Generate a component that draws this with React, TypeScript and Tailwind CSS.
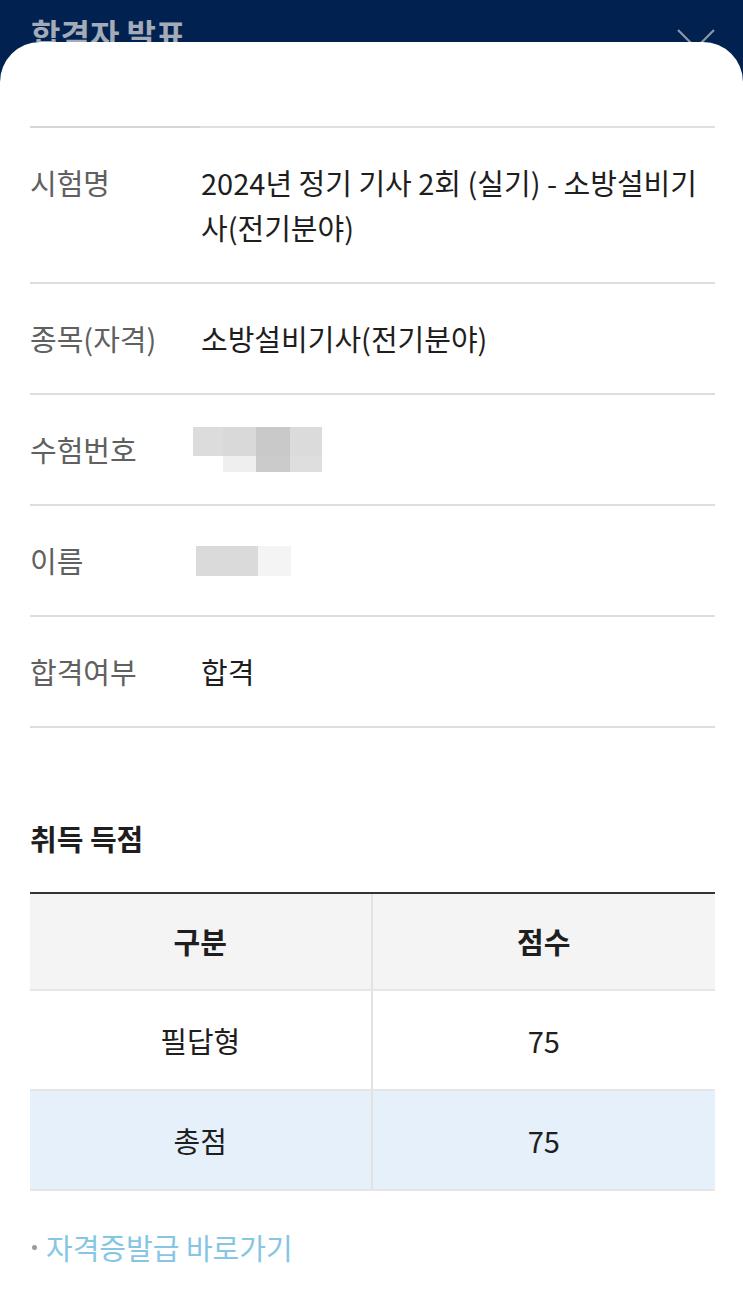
const font = { fontFamily: '"Noto Sans CJK KR", "Noto Sans", sans-serif' };

type Row = { label: string; value?: string; mask?: "id" | "name" };

const rows: Row[] = [
  { label: "시험명", value: "2024년 정기 기사 2회 (실기) - 소방설비기사(전기분야)" },
  { label: "종목(자격)", value: "소방설비기사(전기분야)" },
  { label: "수험번호", mask: "id" },
  { label: "이름", mask: "name" },
  { label: "합격여부", value: "합격" },
];

function IdMask() {
  return (
    <div className="flex h-[45px] flex-col justify-center">
      <div className="-ml-[8px] flex">
        <div className="h-[29px] w-[30px] bg-[#dcdcdc]" />
        <div className="h-[29px] w-[33px] bg-[#d9d9d9]" />
        <div className="h-[29px] w-[34px] bg-[#c9c9c9]" />
        <div className="h-[29px] w-[32px] bg-[#dbdbdb]" />
      </div>
      <div className="-ml-[8px] flex">
        <div className="h-[16px] w-[30px]" />
        <div className="h-[16px] w-[33px] bg-[#efefef]" />
        <div className="h-[16px] w-[34px] bg-[#cbcbcb]" />
        <div className="h-[16px] w-[32px] bg-[#dedede]" />
      </div>
    </div>
  );
}

function NameMask() {
  return (
    <div className="flex h-[45px] items-center">
      <div className="-ml-[5px] flex">
        <div className="h-[30px] w-[62px] bg-[#dadada]" />
        <div className="h-[30px] w-[33px] bg-[#f4f4f4]" />
      </div>
    </div>
  );
}

export default function App() {
  return (
    <div className="min-h-screen bg-[#012150]" style={font}>
      <div className="flex h-[42px] items-start justify-between overflow-hidden pl-[31px] pr-[28px] pt-[14px]">
        <span className="text-[32px] font-bold leading-[38px] text-[#a3aab8]">합격자 발표</span>
        <svg className="mt-[15px]" width="38" height="38" viewBox="0 0 38 38" fill="none">
          <path d="M1 1 L37 37 M37 1 L1 37" stroke="#8e97a8" strokeWidth="2.2" />
        </svg>
      </div>

      <div className="min-h-[1260px] rounded-t-[40px] bg-white pl-[30px] pr-[28px] pt-[84px] pb-[40px]">
        <div className="flex h-[2px]">
          <div className="h-[2px] w-[170px] bg-[#d6d6d6]" />
          <div className="h-[2px] flex-1 bg-[#e0e0e0]" />
        </div>

        {rows.map((r) => (
          <div key={r.label} className="flex border-b-2 border-[#dedede] py-[32px] text-[29px] leading-[45px]">
            <div className="w-[171px] shrink-0 text-[#606060]">{r.label}</div>
            <div className="flex-1 text-[#1e1e1e]">
              {r.mask === "id" ? <IdMask /> : r.mask === "name" ? <NameMask /> : r.value}
            </div>
          </div>
        ))}

        <h2 className="mt-[88px] text-[29px] font-bold leading-[45px] text-[#1e1e1e]">취득 득점</h2>

        <div className="mt-[31px] border-t-2 border-[#333333] text-[29px] leading-[45px] text-[#1e1e1e]">
          <div className="grid h-[97px] grid-cols-2 border-b-2 border-[#e6e6e6] bg-[#f4f4f4] font-bold">
            <div className="flex items-center justify-center border-r-2 border-[#e2e2e2]">구분</div>
            <div className="flex items-center justify-center">점수</div>
          </div>
          <div className="grid h-[100px] grid-cols-2 border-b-2 border-[#e6e6e6] bg-white">
            <div className="flex items-center justify-center border-r-2 border-[#e2e2e2]">필답형</div>
            <div className="flex items-center justify-center">75</div>
          </div>
          <div className="grid h-[100px] grid-cols-2 border-b-2 border-[#e6e6e6] bg-[#e6f0fb]">
            <div className="flex items-center justify-center border-r-2 border-[#e2e2e2]">총점</div>
            <div className="flex items-center justify-center">75</div>
          </div>
        </div>

        <div className="mt-[34px] flex items-center leading-[45px]">
          <span className="ml-[2px] mr-[9px] h-[5px] w-[5px] rounded-full bg-[#9a9a9a]" />
          <span className="text-[29px] text-[#86c6e4]">자격증발급 바로가기</span>
        </div>
      </div>
    </div>
  );
}
